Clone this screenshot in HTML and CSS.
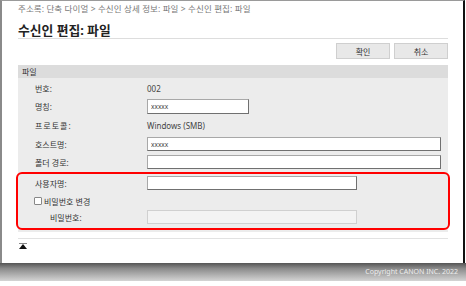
FILE: index.html
```html
<!DOCTYPE html>
<html lang="ko">
<head>
<meta charset="utf-8">
<link rel="stylesheet" href="styles.css">
</head>
<body>
<div class="window">
  <div class="crumb">주소록: 단축 다이얼 &gt; 수신인 상세 정보: 파일 &gt; 수신인 편집: 파일</div>
  <h1 class="title">수신인 편집: 파일</h1>
  <div class="actions">
    <button class="btn">확인</button>
    <button class="btn">취소</button>
  </div>
  <div class="panel">
    <div class="panel-head">파일</div>
    <div class="panel-body">
      <div class="row h18"><span class="lbl">번호:</span><span class="val">002</span></div>
      <div class="row h19"><span class="lbl">명칭:</span><input class="inp w-s" value="xxxxx"></div>
      <div class="row h19"><span class="lbl wide">프로토콜:</span><span class="val">Windows (SMB)</span></div>
      <div class="row h18"><span class="lbl">호스트명:</span><input class="inp w-l" value="xxxxx"></div>
      <div class="row h18"><span class="lbl">폴더 경로:</span><input class="inp w-l" value=""></div>
      <div class="highlight">
        <div class="row h18"><span class="lbl">사용자명:</span><input class="inp w-m" value=""></div>
        <div class="row h18"><label class="chk"><span class="box"></span>비밀번호 변경</label></div>
        <div class="row h14"><span class="lbl sub">비밀번호:</span><input class="inp w-m dis" disabled value=""></div>
      </div>
    </div>
  </div>
  <div class="bottom">
    <svg class="top-icon" width="8" height="6" viewBox="0 0 8 6"><rect x="0" y="0" width="8" height="1" fill="#888"/><polygon points="4,1 8,6 0,6" fill="#111"/></svg>
  </div>
</div>
<div class="footer">Copyright CANON INC. 2022</div>
</body>
</html>
```
FILE: styles.css
```css
* { box-sizing: border-box; }
html, body { margin: 0; padding: 0; background: #fff; }
body {
  width: 466px;
  height: 286px;
  font-family: "Noto Sans", "Noto Sans CJK KR", sans-serif;
  font-size: 8px;
  color: #333;
  overflow: hidden;
}
.window {
  height: 263px;
  width: 465px;
  border-top: 1px solid #9a9a9a;
  border-left: 2px solid #8a8a8a;
  border-right: 2px solid #111;
  padding: 2px 15px 0 16px;
  background: #fff;
}
.crumb {
  height: 12px;
  line-height: 12px;
  color: #777;
  font-size: 8.5px;
  letter-spacing: 0.1px;
}
.title {
  margin: 7px 0 0;
  height: 17px;
  line-height: 16px;
  font-size: 12.8px;
  font-weight: bold;
  color: #222;
  border-bottom: 1px solid #ddd;
}
.actions {
  display: flex;
  justify-content: flex-end;
  gap: 4px;
  margin-top: 4px;
}
.btn {
  width: 54px;
  height: 16px;
  padding: 0;
  font: inherit;
  font-size: 8px;
  color: #333;
  background: #e8e8e8;
  border: 1px solid #cfcfcf;
}
.panel { margin-top: 6px; }
.panel-head {
  height: 13px;
  line-height: 13px;
  background: #dcdcdc;
  padding-left: 4px;
}
.panel-body {
  background: #ececec;
  padding-top: 1px;
  padding-bottom: 2px;
}
.row {
  display: flex;
  align-items: center;
  padding-left: 17px;
}
.h18 { height: 18px; }
.h19 { height: 19px; }
.h14 { height: 14px; }
.lbl { width: 112px; flex: none; }
.lbl.wide { letter-spacing: 1px; }
.lbl.sub { width: 97px; margin-left: 15px; }
.val { color: #444; }
.inp {
  height: 15px;
  padding: 0 3px;
  font: inherit;
  font-size: 6.5px;
  color: #444;
  background: #fff;
  border: 1px solid #a8a8a8;
  border-right-color: #707070;
  border-bottom-color: #707070;
  outline: none;
}
.inp.dis { background: #f3f3f3; border-color: #d0d0d0; height: 14px; }
.w-s { width: 102px; }
.w-m { width: 210px; height: 14px; }
.w-l { width: 294px; height: 14px; }
.highlight {
  margin: 1px -2px 0;
  border: 2px solid #f00;
  border-radius: 6px;
  padding-bottom: 4px;
}
.highlight .row { padding-left: 17px; }
.chk {
  display: flex;
  align-items: center;
  gap: 2px;
  margin-left: -1px;
}
.box {
  width: 8px;
  height: 8px;
  border: 1px solid #888;
  border-radius: 1px;
  background: #fff;
}
.bottom {
  margin-top: 6px;
  border-top: 1px solid #e2e2e2;
  padding: 4px 0 0 1px;
  height: 16px;
}
.top-icon { display: block; }
.footer {
  height: 18px;
  line-height: 18px;
  text-align: right;
  padding-right: 8px;
  font-size: 7px;
  color: #eee;
  background: linear-gradient(#555, #8a8a8a 30%, #d4d4d4);
}
```
